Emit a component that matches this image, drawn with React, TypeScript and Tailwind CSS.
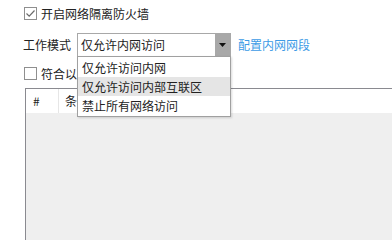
const font = { fontFamily: '"Noto Sans CJK SC", "Noto Sans", sans-serif' }

const options = ['仅允许访问内网', '仅允许访问内部互联区', '禁止所有网络访问']

function CheckBox({ checked }: { checked?: boolean }) {
  return (
    <div className="w-[13px] h-[13px] border border-[#8f8f8f] bg-white flex items-center justify-center shrink-0">
      {checked && (
        <svg width="11" height="11" viewBox="0 0 11 11">
          <path d="M1.5 5.5 L4.2 8.2 L9.5 2.5" fill="none" stroke="#6b6b6b" strokeWidth="1.2" />
        </svg>
      )}
    </div>
  )
}

export default function App() {
  return (
    <div style={font} className="relative w-[392px] h-[240px] overflow-hidden bg-white text-[12px] text-[#222] flex flex-col">
      {/* enable firewall */}
      <div className="flex items-center gap-[4px] pl-[24px] pt-[7px] h-[20px]">
        <CheckBox checked />
        <span className="leading-[13px]">开启网络隔离防火墙</span>
      </div>

      {/* work mode */}
      <div className="flex items-center pl-[23px] mt-[13px] h-[24px]">
        <span className="w-[54px]">工作模式</span>
        <div className="w-[154px] h-[24px] border border-[#a8a8a8] flex">
          <div className="flex-1 bg-white pl-[3px] flex items-center">仅允许内网访问</div>
          <div className="w-[15px] bg-[#a8a8a8] flex items-center justify-center">
            <svg width="7" height="4" viewBox="0 0 7 4">
              <path d="M0 0 H7 L3.5 4 Z" fill="#111" />
            </svg>
          </div>
        </div>
        <a className="ml-[7px] text-[#3c9be6]">配置内网网段</a>
      </div>

      {/* second checkbox */}
      <div className="flex items-center gap-[4px] pl-[24px] mt-[10px] h-[13px]">
        <CheckBox />
        <span className="leading-[13px]">符合以下条件的程序允许访问</span>
      </div>

      {/* table */}
      <div className="ml-[25px] mt-[8px] w-[400px] flex-1 border-l-[1.5px] border-t-[1.5px] border-[#8a8a90] flex flex-col">
        <div className="h-[24px] bg-white flex items-center">
          <div className="w-[33px] h-full pl-[7px] flex items-center border-r border-[#e6e6e6]">#</div>
          <div className="pl-[6px]">条件</div>
        </div>
        <div className="flex-1 bg-[#efefef]" />
      </div>

      {/* open dropdown */}
      <div className="absolute left-[77px] top-[56px] w-[154px] bg-white border border-[#a0a0a0] shadow-[1px_1px_2px_rgba(0,0,0,0.15)] py-[1px]">
        {options.map((o, i) => (
          <div key={o} className={`h-[19px] pl-[4px] flex items-center ${i === 1 ? 'bg-[#e5e5e5]' : ''}`}>
            {o}
          </div>
        ))}
      </div>
    </div>
  )
}
